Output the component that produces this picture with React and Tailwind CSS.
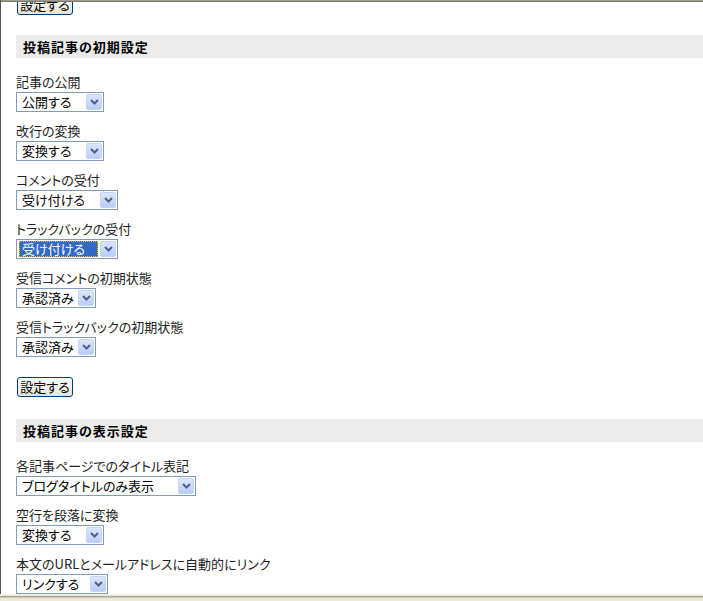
import React from "react";

const font = "font-['Noto_Sans_CJK_JP',sans-serif] [font-feature-settings:'palt']";

function Arrow() {
  return (
    <div className="w-[16px] h-[16px] mr-[1px] rounded-[2px] bg-gradient-to-b from-[#dce6fd] to-[#b9cdf8] border border-[#c3d3fd] flex items-center justify-center">
      <svg width="9" height="6" viewBox="0 0 9 6">
        <path d="M1 1 L4.5 4.5 L8 1" fill="none" stroke="#4d6185" strokeWidth="2" />
      </svg>
    </div>
  );
}

function Select({ value, width, active }) {
  return (
    <div
      className="h-[20px] border border-[#7f9db9] bg-white flex items-center justify-between"
      style={{ width }}
    >
      {active ? (
        <span className="ml-[2px] h-[16px] px-[3px] bg-[#316ac5] text-white outline outline-1 outline-dotted outline-[#f0b040] -outline-offset-1 text-[13px] leading-[16px] flex-1 mr-[2px]">
          {value}
        </span>
      ) : (
        <span className="ml-[5px] text-[13px] leading-[16px] text-black">{value}</span>
      )}
      <Arrow />
    </div>
  );
}

function Item({ label, value, width, active, last }) {
  return (
    <div className={last ? "" : "mb-[11px]"}>
      <div className="h-[16px] leading-[16px] text-[13px] text-[#222] whitespace-nowrap">{label}</div>
      <div className="mt-[2px]">
        <Select value={value} width={width} active={active} />
      </div>
    </div>
  );
}

function Button() {
  return (
    <button className="block h-[20px] w-[56px] ml-[1px] rounded-[3px] border border-[#003c74] bg-gradient-to-b from-white to-[#e6e3d6] text-[13px] leading-[16px] text-black px-0">
      設定する
    </button>
  );
}

function Header({ children }) {
  return (
    <div className="h-[23px] bg-[#ececec] flex items-center pl-[7px] text-[13px] font-bold tracking-[1px] text-black">
      {children}
    </div>
  );
}

export default function App() {
  return (
    <div className={`w-[703px] h-[601px] overflow-hidden bg-white flex flex-col ${font}`}>
      <div className="flex-1 flex overflow-hidden">
        <div className="w-[1px] bg-[#555]" />
        <div className="flex-1 flex flex-col overflow-hidden relative">
          <div className="h-[1px] bg-[#9c9a8c] relative z-10" />
          <div className="h-[1px] bg-[#7d7b6e] relative z-10" />
          <div className="pl-[15px] -mt-[7px]">
            <Button />
            <div className="mt-[20px]">
              <Header>投稿記事の初期設定</Header>
            </div>
            <div className="mt-[16px]">
              <Item label="記事の公開" value="公開する" width={88} />
              <Item label="改行の変換" value="変換する" width={88} />
              <Item label="コメントの受付" value="受け付ける" width={102} />
              <Item label="トラックバックの受付" value="受け付ける" width={102} active />
              <Item label="受信コメントの初期状態" value="承認済み" width={80} />
              <Item label="受信トラックバックの初期状態" value="承認済み" width={80} last />
            </div>
            <div className="mt-[20px]">
              <Button />
            </div>
            <div className="mt-[22px]">
              <Header>投稿記事の表示設定</Header>
            </div>
            <div className="mt-[16px]">
              <Item label="各記事ページでのタイトル表記" value="ブログタイトルのみ表示" width={180} />
              <Item label="空行を段落に変換" value="変換する" width={88} />
              <Item label="本文のURLとメールアドレスに自動的にリンク" value="リンクする" width={92} last />
            </div>
          </div>
        </div>
      </div>
      <div className="h-[7px] flex flex-col">
        <div className="h-[1px] bg-[#f4f2e6]" />
        <div className="h-[1px] bg-[#ece9d8]" />
        <div className="h-[1px] bg-[#a8a698]" />
        <div className="h-[1px] bg-[#c8c6b8]" />
        <div className="flex-1 bg-[#ece9d8]" />
      </div>
    </div>
  );
}
